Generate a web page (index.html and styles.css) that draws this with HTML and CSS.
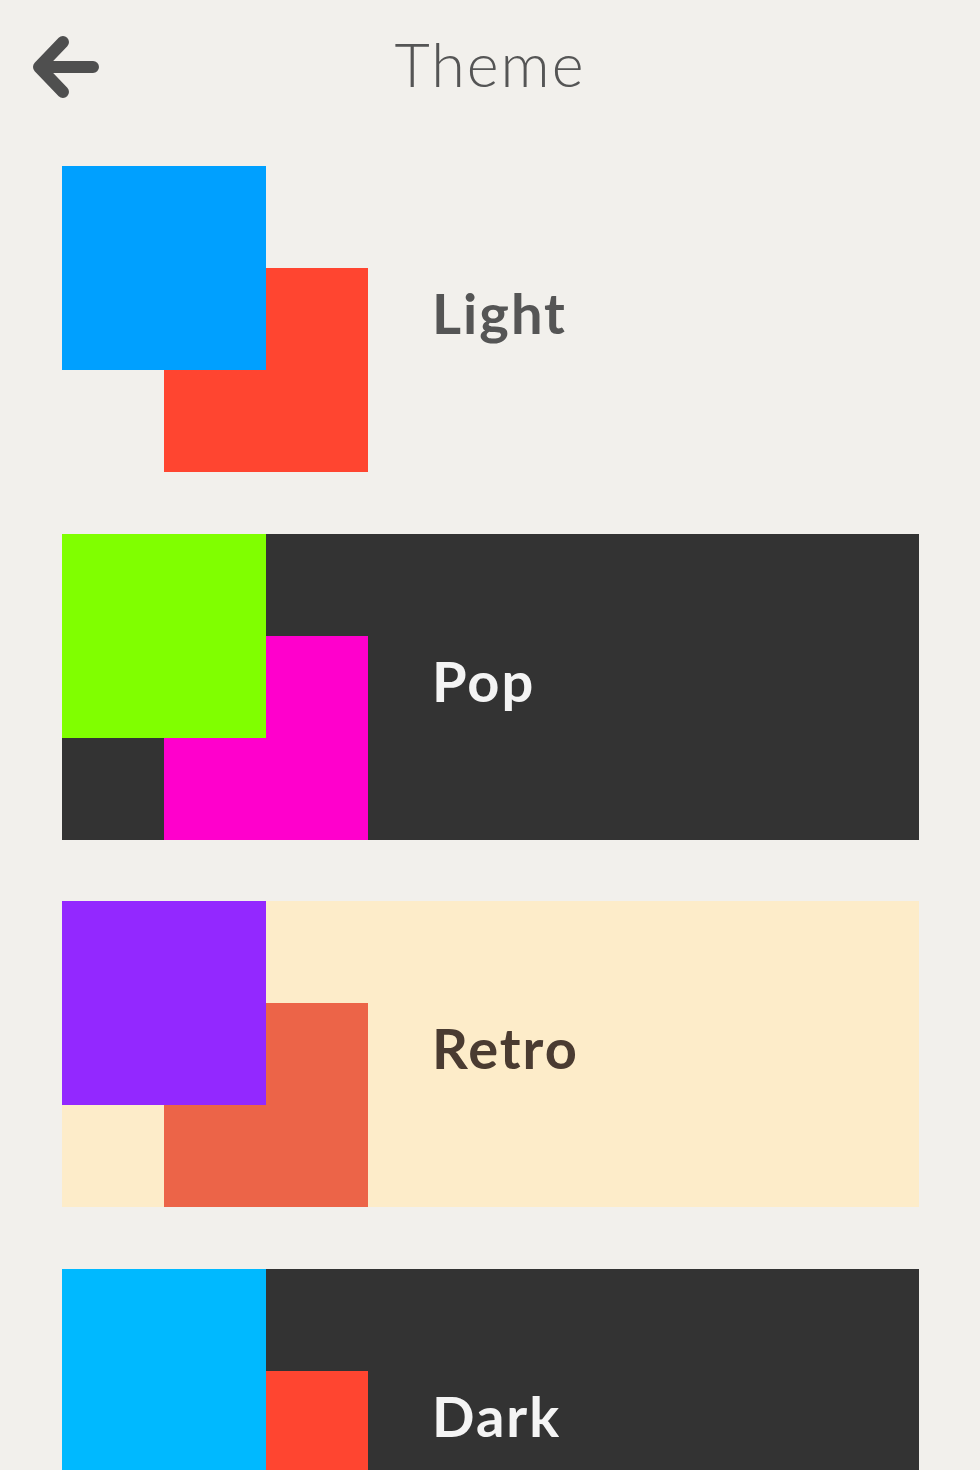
FILE: index.html
```html
<!doctype html>
<html lang="en">
<head>
	<meta charset="UTF-8">
	<title>Theme</title>
	<link rel="stylesheet" href="styles.css">
</head>
<body>
	<header class="topbar">
		<a href="#" class="back">
			<svg width="80" height="80" viewBox="0 0 80 80">
				<path d="M41 15 L17 40 L41 65 M17 40 L71 40" fill="none" stroke="#4f4f4f" stroke-width="12" stroke-linecap="round" stroke-linejoin="round"/>
			</svg>
		</a>
		<h1 class="title">Theme</h1>
		<span></span>
	</header>

	<ul class="themes">
		<li class="theme light">
			<div class="swatch"><span class="sq sq-a"></span><span class="sq sq-b"></span></div>
			<span class="name">Light</span>
		</li>
		<li class="theme pop">
			<div class="swatch"><span class="sq sq-a"></span><span class="sq sq-b"></span></div>
			<span class="name">Pop</span>
		</li>
		<li class="theme retro">
			<div class="swatch"><span class="sq sq-a"></span><span class="sq sq-b"></span></div>
			<span class="name">Retro</span>
		</li>
		<li class="theme dark">
			<div class="swatch"><span class="sq sq-a"></span><span class="sq sq-b"></span></div>
			<span class="name">Dark</span>
		</li>
	</ul>
</body>
</html>
```

FILE: styles.css
```css
/*复位*/
*{padding:0;margin:0;box-sizing:border-box;}
ul{list-style:none;}

html,body{width:100%;height:100%;overflow:hidden;}
body{
	background-color:#f2f0ec;
	font-family:Lato,"Open Sans",sans-serif;
}

/*顶部*/
.topbar{
	height:134px;
	display:grid;
	grid-template-columns:1fr auto 1fr;
	align-items:center;
}
.back{display:block;width:80px;height:80px;margin-left:22px;}
.back svg{display:block;}
.title{
	font-size:61px;
	font-weight:300;
	letter-spacing:2px;
	color:#555;
	line-height:72px;
	padding-bottom:7px;
}

/*主题列表*/
.themes{
	margin:32px 61px 0 62px;
	display:flex;
	flex-direction:column;
	gap:61.5px;
}
.theme{
	height:306px;
	display:flex;
	align-items:center;
	flex-shrink:0;
}
.swatch{
	width:306px;height:306px;
	display:grid;
	grid-template-columns:repeat(3,102px);
	grid-template-rows:repeat(3,102px);
}
.sq{display:block;}
.sq-a{grid-area:1/1/3/3;z-index:2;}
.sq-b{grid-area:2/2/4/4;z-index:1;}
.name{
	margin-left:64px;
	font-size:56px;
	font-weight:700;
	letter-spacing:2px;
	line-height:1;
	padding-bottom:12px;
}

.light .sq-a{background-color:#00a0ff;}
.light .sq-b{background-color:#ff4530;}
.light .name{color:#555;}

.pop{background-color:#333;}
.pop .sq-a{background-color:#80ff00;}
.pop .sq-b{background-color:#ff00cc;}
.pop .name{color:#f4f4f4;}

.retro{background-color:#fdecc9;}
.retro .sq-a{background-color:#9328ff;}
.retro .sq-b{background-color:#ec6448;}
.retro .name{color:#4a3b31;}

.dark{background-color:#333;}
.dark .sq-a{background-color:#00b9ff;}
.dark .sq-b{background-color:#ff4530;}
.dark .name{color:#f4f4f4;}
```
